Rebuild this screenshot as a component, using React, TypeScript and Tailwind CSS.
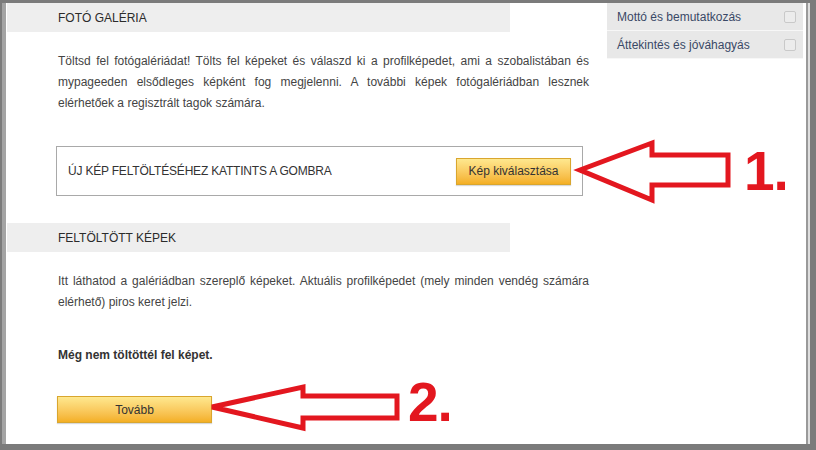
import React from "react";

const font = { fontFamily: '"Liberation Sans", Arial, sans-serif' };

function SectionHeader({ title }: { title: string }) {
  return (
    <div className="flex h-[29px] w-[503px] items-center bg-[#eeeeee] pl-[51px] text-[12px] text-[#2b2b2b] uppercase">
      {title}
    </div>
  );
}

function YellowButton({ label, className }: { label: string; className: string }) {
  return (
    <button
      className={
        "flex h-[27px] items-center justify-center border border-[#d9a62e] bg-linear-to-b from-[#fee88e] to-[#f4af22] text-[12px] text-[#333] shadow-[0_1px_1px_rgba(0,0,0,0.15)] " +
        className
      }
    >
      {label}
    </button>
  );
}

function SideItem({ label }: { label: string }) {
  return (
    <div className="flex h-[28px] items-center justify-between border-b border-[#f7f7f7] bg-[#e8e8e8] pl-[10px] pr-[7px] text-[12px] text-[#3a4866]">
      <span>{label}</span>
      <span className="h-[12px] w-[12px] rounded-[2px] border border-[#c9c9c9] bg-[#ececec]" />
    </div>
  );
}

export default function App() {
  return (
    <div className="relative h-[450px] w-[816px] overflow-hidden bg-[#7b7b7b] pt-[3px] pr-[6px] pb-[6px] pl-[2px]" style={font}>
      <div className="flex h-full">
        <div className="w-[4px] bg-[#a4a4a4]" />
        <div className="flex flex-1 bg-white pl-[1px] pr-[3px]">
          {/* main column */}
          <div className="w-[593px]">
            <SectionHeader title="Fotó galéria" />
            <div className="mt-[19px] ml-[51px] w-[531px] text-[12px] leading-[21px] text-[#444]">
              <div className="whitespace-nowrap text-justify [text-align-last:justify]">
                Töltsd fel fotógalériádat! Tölts fel képeket és válaszd ki a profilképedet, ami a szobalistában és
              </div>
              <div className="whitespace-nowrap text-justify [text-align-last:justify]">
                mypageeden elsődleges képként fog megjelenni. A további képek fotógalériádban lesznek
              </div>
              <div className="whitespace-nowrap">elérhetőek a regisztrált tagok számára.</div>
            </div>

            <div className="mt-[32px] ml-[49px] flex h-[50px] w-[527px] items-center justify-between border border-[#a9a9a9] pl-[11px] pr-[11px]">
              <span className="text-[12px] tracking-[-0.2px] text-[#333] uppercase">Új kép feltöltéséhez kattints a gombra</span>
              <YellowButton label="Kép kiválasztása" className="w-[115px]" />
            </div>

            <div className="mt-[27px]">
              <SectionHeader title="Feltöltött képek" />
            </div>
            <div className="mt-[19px] ml-[51px] w-[531px] text-[12px] leading-[21px] text-[#444]">
              <div className="whitespace-nowrap text-justify [text-align-last:justify]">
                Itt láthatod a galériádban szereplő képeket. Aktuális profilképedet (mely minden vendég számára
              </div>
              <div className="whitespace-nowrap">elérhető) piros keret jelzi.</div>
            </div>

            <p className="mt-[32px] ml-[51px] text-[12px] leading-[21px] font-bold text-[#333]">
              Még nem töltöttél fel képet.
            </p>
            <YellowButton label="Tovább" className="mt-[30px] ml-[50px] w-[155px]" />
          </div>

          {/* sidebar */}
          <div className="ml-[7px] w-[196px]">
            <SideItem label="Mottó és bemutatkozás" />
            <SideItem label="Áttekintés és jóváhagyás" />
          </div>
        </div>
        <div className="w-[2px] bg-[#9a9a9a]" />
        <div className="w-[2px] bg-[#dedede]" />
      </div>

      {/* annotations */}
      <svg className="pointer-events-none absolute top-0 left-0" width="816" height="450">
        <polygon
          points="580,170 652,143 652,155 728,155 728,185 652,185 652,200"
          fill="none"
          stroke="#e3171f"
          strokeWidth="5"
          strokeLinejoin="miter"
        />
        <polygon
          points="212,407 303,387 303,396 397,396 397,418 303,418 303,428"
          fill="none"
          stroke="#e3171f"
          strokeWidth="5"
          strokeLinejoin="miter"
        />
      </svg>
      <span className="absolute top-[138px] left-[744px] text-[55px] leading-[66px] font-bold tracking-[-1px] text-[#e3171f]">
        1.
      </span>
      <span className="absolute top-[369px] left-[408px] text-[55px] leading-[66px] font-bold tracking-[-1px] text-[#e3171f]">
        2.
      </span>
    </div>
  );
}
